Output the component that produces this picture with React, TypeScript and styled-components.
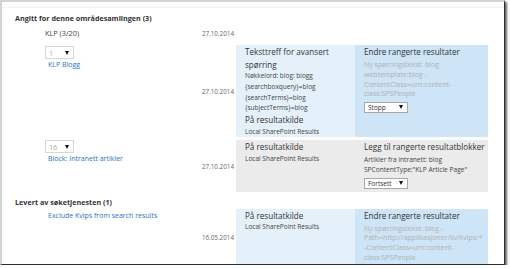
import React from 'react'
import styled, { createGlobalStyle } from 'styled-components'

type Tone = 'blue' | 'gray'

const GlobalStyle = createGlobalStyle`
    html, body {
        margin: 0;
        padding: 0;
        background: #fff;
    }
    body {
        font-family: "Open Sans", "Noto Sans", sans-serif;
        color: #333;
    }
`

const Frame = styled.div`
    box-sizing: border-box;
    width: 505px;
    height: 265px;
    border-top: 2px solid #d4d4d4;
    border-left: 2px solid #d4d4d4;
    border-right: 1px solid #2e2e2e;
    border-bottom: 1px solid #2e2e2e;
    box-shadow: 2px 2px 2px rgba(0, 0, 0, 0.6);
    background: #fff;
    overflow: hidden;
`

const Content = styled.div`
    margin-top: 5px;
    border-top: 1px solid #f2f2f2;
    padding-left: 13px;
`

const SectionTitle = styled.h3`
    margin: 3px 0 0;
    font-size: 7.2px;
    line-height: 14px;
    font-weight: 700;
    color: #333;
`

const Row = styled.div<{ $gap?: number }>`
    display: grid;
    grid-template-columns: 145px 46px 119px 133px;
    margin-left: 30px;
    margin-top: ${(p) => p.$gap ?? 0}px;
`

const NameCell = styled.div`
    display: flex;
    flex-direction: column;
    align-items: flex-start;
`

const PlainName = styled.span`
    font-size: 7.3px;
    line-height: 14px;
    color: #444;
`

const ItemLink = styled.a<{ $top?: number }>`
    display: block;
    margin: ${(p) => p.$top ?? 0}px 0 0 3px;
    font-size: 7px;
    line-height: 12px;
    color: #2b73c0;
    text-decoration: none;
    white-space: nowrap;
`

const DateCell = styled.div`
    align-self: center;
    text-align: right;
    padding-right: 2px;
    font-size: 6.3px;
    color: #666;
`

const QueryCell = styled.div<{ $tone: Tone }>`
    background: ${(p) => (p.$tone === 'blue' ? '#e5f1fa' : '#ebebeb')};
    padding: 1px 2px 0 9px;
`

const ActionCell = styled.div<{ $tone: Tone }>`
    background: ${(p) => (p.$tone === 'blue' ? '#cde5f6' : '#ebebeb')};
    padding: 1px 0 3px 9px;
`

const PanelTitle = styled.div`
    font-size: 8.1px;
    line-height: 12.5px;
    color: #333;
`

const Detail = styled.div`
    font-size: 6.5px;
    line-height: 10.8px;
    color: #444;
    white-space: nowrap;
`

const RuleText = styled.div<{ $muted?: boolean }>`
    margin-top: 1.5px;
    font-size: ${(p) => (p.$muted ? 7 : 6.6)}px;
    line-height: 9.8px;
    color: ${(p) => (p.$muted ? '#b2b2b2' : '#444')};
    white-space: nowrap;
`

const Dropdown = styled.div<{ $panel?: boolean; $top?: number }>`
    box-sizing: border-box;
    display: flex;
    align-items: center;
    justify-content: space-between;
    width: ${(p) => (p.$panel ? 44 : 29)}px;
    height: ${(p) => (p.$panel ? 11 : 13)}px;
    margin-top: ${(p) => p.$top ?? 0}px;
    padding: 0 4px 0 3px;
    background: #fff;
    border: 1px solid ${(p) => (p.$panel ? '#a8a8a8' : '#d6d6d6')};
    font-size: ${(p) => (p.$panel ? 6.5 : 7.2)}px;
    color: ${(p) => (p.$panel ? '#333' : '#aaa')};
`

const Arrow = styled.span`
    width: 0;
    height: 0;
    border-left: 2.5px solid transparent;
    border-right: 2.5px solid transparent;
    border-top: 4px solid #111;
`

const Select: React.FC<{ value: string; panel?: boolean; top?: number }> = ({ value, panel, top }) => (
    <Dropdown $panel={panel} $top={top}>
        <span>{value}</span>
        <Arrow />
    </Dropdown>
)

const App: React.FC = () => {
    return (
        <Frame>
            <GlobalStyle />
            <Content>
                <SectionTitle>Angitt for denne områdesamlingen (3)</SectionTitle>

                <Row $gap={1}>
                    <NameCell>
                        <PlainName>KLP (3/20)</PlainName>
                    </NameCell>
                    <DateCell>27.10.2014</DateCell>
                </Row>

                <Row $gap={5}>
                    <NameCell>
                        <Select value="1" top={1} />
                        <ItemLink href="#">KLP Blogg</ItemLink>
                    </NameCell>
                    <DateCell>27.10.2014</DateCell>
                    <QueryCell $tone="blue">
                        <PanelTitle>Teksttreff for avansert<br />spørring</PanelTitle>
                        <Detail>Nøkkelord: blog: blogg</Detail>
                        <Detail>{'{searchboxquery}=blog'}</Detail>
                        <Detail>{'{searchTerms}=blog'}</Detail>
                        <Detail>{'{subjectTerms}=blog'}</Detail>
                        <PanelTitle>På resultatkilde</PanelTitle>
                        <Detail>Local SharePoint Results</Detail>
                    </QueryCell>
                    <ActionCell $tone="blue">
                        <PanelTitle>Endre rangerte resultater</PanelTitle>
                        <RuleText $muted>
                            Ny spørringstekst: blog<br />
                            webtemplate:blog -<br />
                            ContentClass=urn:content-<br />
                            class:SPSPeople
                        </RuleText>
                        <Select value="Stopp" panel top={2.5} />
                    </ActionCell>
                </Row>

                <Row $gap={3}>
                    <NameCell>
                        <Select value="16" />
                        <ItemLink href="#">Block: Intranett artikler</ItemLink>
                    </NameCell>
                    <DateCell>27.10.2014</DateCell>
                    <QueryCell $tone="gray">
                        <PanelTitle>På resultatkilde</PanelTitle>
                        <Detail>Local SharePoint Results</Detail>
                    </QueryCell>
                    <ActionCell $tone="gray">
                        <PanelTitle>Legg til rangerte resultatblokker</PanelTitle>
                        <RuleText>
                            Artikler fra intranett: blog<br />
                            SPContentType:"KLP Article Page"
                        </RuleText>
                        <Select value="Fortsett" panel top={2.5} />
                    </ActionCell>
                </Row>

                <SectionTitle>Levert av søketjenesten (1)</SectionTitle>

                <Row>
                    <NameCell>
                        <ItemLink href="#" $top={1}>Exclude Kvips from search results</ItemLink>
                    </NameCell>
                    <DateCell>16.05.2014</DateCell>
                    <QueryCell $tone="blue">
                        <PanelTitle>På resultatkilde</PanelTitle>
                        <Detail>Local SharePoint Results</Detail>
                    </QueryCell>
                    <ActionCell $tone="blue">
                        <PanelTitle>Endre rangerte resultater</PanelTitle>
                        <RuleText $muted>
                            Ny spørringstekst: blog -<br />
                            Path=http://applikasjoner/liv/kvips/*<br />
                            -ContentClass=urn:content-<br />
                            class:SPSPeople
                        </RuleText>
                    </ActionCell>
                </Row>
            </Content>
        </Frame>
    )
}

export default App
